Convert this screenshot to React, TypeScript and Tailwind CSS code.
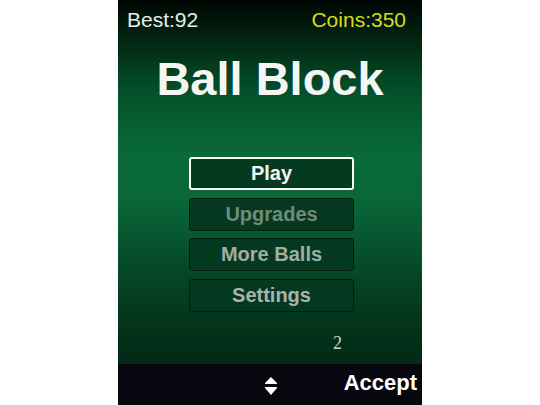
import React from "react";

const font = { fontFamily: '"Liberation Sans", Arial, sans-serif' };

function Btn({ label, active, color }: { label: string; active?: boolean; color: string }) {
  return (
    <div
      className={
        "h-[33px] w-[165px] flex items-center justify-center rounded-[3px] font-bold text-[20px] leading-none pb-[1px] " +
        (active ? "border-2 border-white bg-[#053a20]" : "border border-[#021d0e] bg-[#043820]")
      }
      style={{ color }}
    >
      {label}
    </div>
  );
}

export default function App() {
  return (
    <div className="w-[540px] h-[405px] bg-white flex justify-center" style={font}>
      <div className="w-[304px] h-[405px] flex flex-col">
        <div className="h-[364px] flex flex-col bg-[linear-gradient(to_bottom,#000603_0%,#01200f_9%,#05502a_25%,#0a6a38_43%,#096638_56%,#064a28_73%,#03311a_91%,#022a16_100%)]">
          <div className="flex justify-between pt-[8px] pl-[9px] pr-[16px] text-[21px] leading-[24px]">
            <span className="text-[#e8efe9]">Best:92</span>
            <span className="text-[#d8dc1c]">Coins:350</span>
          </div>
          <div className="mt-[23px] text-center text-[47px] leading-[47px] font-bold text-[#f4f6f4]">Ball Block</div>
          <div className="mt-[55px] flex flex-col items-center gap-[7.5px] pl-[3px]">
            <Btn label="Play" active color="#f2f5f2" />
            <Btn label="Upgrades" color="#718b7b" />
            <Btn label="More Balls" color="#a2ada5" />
            <Btn label="Settings" color="#aab2ac" />
          </div>
          <div className="mt-[20px] pl-[215px] text-[18px] leading-[22px] text-[#c6d6cc]" style={{ fontFamily: '"Liberation Serif", "Times New Roman", serif' }}>
            2
          </div>
        </div>
        <div className="h-[41px] bg-[#07070f] flex items-center relative">
          <div className="flex-1 flex justify-center pl-[2px] pt-[3px]">
            <svg width="14" height="18" viewBox="0 0 14 18">
              <polygon points="7,0 13,6 13,7 1,7 1,6" fill="#ffffff" />
              <polygon points="1,10 13,10 13,11 7,18 1,11" fill="#ffffff" />
            </svg>
          </div>
          <div className="absolute right-[5px] top-[7px] text-[22px] leading-[24px] font-bold text-white">Accept</div>
        </div>
      </div>
    </div>
  );
}
